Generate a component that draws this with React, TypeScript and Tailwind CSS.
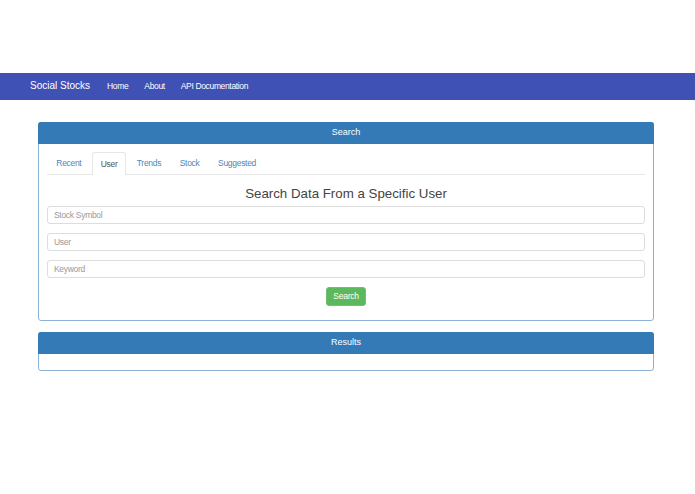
export default function App() {
  const tabs = ["Recent", "User", "Trends", "Stock", "Suggested"];
  const fields = ["Stock Symbol", "User", "Keyword"];

  return (
    <div className="h-[494px] overflow-hidden bg-white pt-[73px] font-['Liberation_Sans',Arial,sans-serif] text-[#333]">
      <nav className="flex h-[27px] items-center bg-[#3f51b5] pb-px pl-[30px] text-white">
        <span className="mr-[17px] text-[10px] leading-none">Social Stocks</span>
        <a className="mr-[16px] text-[8.5px] tracking-[-0.35px]">Home</a>
        <a className="mr-[16px] text-[8.5px] tracking-[-0.35px]">About</a>
        <a className="text-[8.5px] tracking-[-0.35px]">API Documentation</a>
      </nav>

      <main className="ml-[38px] w-[616px] pt-[22px]">
        <section className="h-[199px] rounded-[3px] border border-[#8db2d6]">
          <div className="-mx-px -mt-px flex h-[22px] items-center justify-center rounded-t-[3px] bg-[#337ab7] pb-px text-[9px] text-white">
            Search
          </div>
          <div className="px-[8px] pt-[8px]">
            <div className="flex h-[23px] border-b border-[#e6e6e6] text-[8.5px] tracking-[-0.3px] text-[#4f86b8]">
              {tabs.map((tab) => (
                <a
                  key={tab}
                  className={
                    tab === "User"
                      ? "mx-px flex h-[23px] items-center rounded-t-[3px] border border-b-0 border-[#e6e6e6] bg-white px-[8px] pt-px text-[#555]"
                      : "flex h-[22px] items-center px-[9.3px] pt-px"
                  }
                >
                  {tab}
                </a>
              ))}
            </div>
            <h2 className="mt-[10px] text-center text-[13.3px] leading-[17px] text-[#444]">Search Data From a Specific User</h2>
            <div className="mt-[4px] flex flex-col gap-[9px]">
              {fields.map((field) => (
                <input
                  key={field}
                  placeholder={field}
                  className="h-[18px] w-full rounded-[3px] border border-[#ddd] bg-white px-[6px] text-[8.5px] tracking-[-0.3px] placeholder:text-[#999]"
                />
              ))}
            </div>
            <div className="mt-[9px] flex justify-center">
              <button className="h-[19px] w-[40px] rounded-[3px] border border-[#6fc06f] bg-[#5cb85c] text-[8.5px] tracking-[-0.25px] text-white">
                Search
              </button>
            </div>
          </div>
        </section>

        <section className="mt-[11px] h-[39px] rounded-[3px] border border-[#8db2d6]">
          <div className="-mx-px -mt-px flex h-[22px] items-center justify-center rounded-t-[3px] bg-[#337ab7] pb-px text-[9px] text-white">
            Results
          </div>
        </section>
      </main>
    </div>
  );
}
